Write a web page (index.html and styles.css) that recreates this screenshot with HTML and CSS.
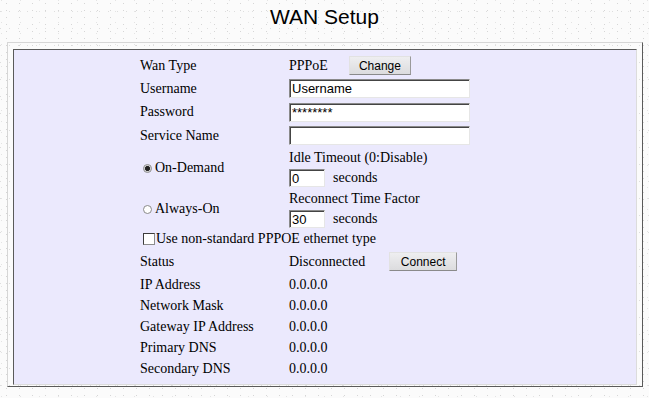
FILE: index.html
```html
<!DOCTYPE html>
<html lang="en">
<head>
  <meta charset="UTF-8" />
  <title>WAN Setup</title>
  <link rel="stylesheet" href="styles.css">
</head>
<body>
  <h1 class="page-title">WAN Setup</h1>

  <div class="frame">
    <div class="panel">
      <form class="wan-form">
        <div class="row">
          <span class="label">Wan Type</span>
          <span class="value">PPPoE <button type="button" class="btn btn-change">Change</button></span>
        </div>
        <div class="row">
          <label class="label" for="username">Username</label>
          <span class="value"><input type="text" id="username" class="field" value="Username" /></span>
        </div>
        <div class="row row-pass">
          <label class="label" for="password">Password</label>
          <span class="value"><input type="text" id="password" class="field" value="********" /></span>
        </div>
        <div class="row">
          <label class="label" for="service">Service Name</label>
          <span class="value"><input type="text" id="service" class="field" /></span>
        </div>

        <!-- connection mode -->
        <div class="row row-tall first-mode">
          <label class="label radio-label"><input type="radio" name="mode" class="radio" checked />On-Demand</label>
          <div class="value stack">
            <span class="sub-title">Idle Timeout (0:Disable)</span>
            <span class="sub-input"><input type="text" class="field small" value="0" /> seconds</span>
          </div>
        </div>
        <div class="row row-tall">
          <label class="label radio-label"><input type="radio" name="mode" class="radio" />Always-On</label>
          <div class="value stack">
            <span class="sub-title">Reconnect Time Factor</span>
            <span class="sub-input"><input type="text" class="field small" value="30" /> seconds</span>
          </div>
        </div>
        <div class="row row-check">
          <label class="check-label"><input type="checkbox" class="check" />Use non-standard PPPOE ethernet type</label>
        </div>

        <!-- status -->
        <div class="row row-status">
          <span class="label">Status</span>
          <span class="value"><span class="status-text">Disconnected</span><button type="button" class="btn btn-connect">Connect</button></span>
        </div>
        <div class="row row-info">
          <span class="label">IP Address</span>
          <span class="value">0.0.0.0</span>
        </div>
        <div class="row row-info">
          <span class="label">Network Mask</span>
          <span class="value">0.0.0.0</span>
        </div>
        <div class="row row-info">
          <span class="label">Gateway IP Address</span>
          <span class="value">0.0.0.0</span>
        </div>
        <div class="row row-info">
          <span class="label">Primary DNS</span>
          <span class="value">0.0.0.0</span>
        </div>
        <div class="row row-info">
          <span class="label">Secondary DNS</span>
          <span class="value">0.0.0.0</span>
        </div>
      </form>
    </div>
  </div>
</body>
</html>
```

FILE: styles.css
```css
* {
  box-sizing: border-box;
  margin: 0;
  padding: 0;
}
body {
  background-color: #fbfbfb;
  background-image:
    radial-gradient(circle, #d6d6d6 0.6px, transparent 0.9px),
    radial-gradient(circle, #dedede 0.6px, transparent 0.9px),
    radial-gradient(circle, #e4e4e4 0.6px, transparent 0.9px);
  background-size: 13px 7px, 9px 17px, 19px 11px;
  background-position: 0 0, 5px 3px, 11px 6px;
  font-family: 'Liberation Serif', 'Times New Roman', serif;
  font-size: 14px;
  color: #000;
  width: 649px;
  height: 398px;
  overflow: hidden;
}
.page-title {
  height: 42px;
  padding-top: 3px;
  font-family: 'Liberation Sans', Arial, sans-serif;
  font-size: 21px;
  font-weight: normal;
  line-height: 28px;
  text-align: center;
}
.frame {
  margin: 0 6px 0 7px;
  padding: 6px 5px 1px 5px;
  border: 1px solid;
  border-color: #d6d6d6 #5a5a5a #5a5a5a #d6d6d6;
}
.panel {
  background: #ebe9fd;
  border: 1px solid;
  border-color: #5a5a5a #dcdcdc #dcdcdc #5a5a5a;
  padding: 4px 0 5px;
}
.wan-form {
  width: 370px;
  margin: 0 auto;
}
.row {
  display: flex;
  align-items: center;
  height: 23px;
}
.row-pass {
  height: 24px;
}
.label {
  width: 149px;
  flex-shrink: 0;
}
.value {
  display: flex;
  align-items: center;
}
.row-tall {
  height: 40px;
}
.first-mode {
  height: 42px;
}
.row-check {
  height: 20px;
}
.row-status {
  height: 25px;
}
.row-info {
  height: 21px;
}
.stack {
  flex-direction: column;
  align-items: flex-start;
}
.sub-title {
  height: 20px;
  line-height: 20px;
}
.sub-input {
  height: 21px;
  display: flex;
  align-items: center;
}
.field {
  width: 181px;
  height: 19px;
  border: 1px solid;
  border-color: #8a8a8a #e6e6e6 #e6e6e6 #8a8a8a;
  box-shadow: inset 1px 1px 0 #444;
  background: #fff;
  font-family: 'Liberation Sans', Arial, sans-serif;
  font-size: 13px;
  padding: 0 2px;
  outline: none;
}
.field.small {
  width: 36px;
  height: 18px;
  margin-right: 8px;
}
.btn {
  height: 19px;
  border: 1px solid;
  border-color: #e2e2e2 #9a9a9a #8a8a8a #e2e2e2;
  background: linear-gradient(#eeeef0, #dcdcde);
  font-family: 'Liberation Sans', Arial, sans-serif;
  font-size: 12px;
  color: #000;
}
.btn-change {
  width: 62px;
  margin-left: 21px;
}
.btn-connect {
  width: 68px;
  margin-left: 24px;
}
.radio-label {
  display: flex;
  align-items: center;
  padding-left: 3px;
}
.radio {
  appearance: none;
  width: 9px;
  height: 9px;
  border: 1px solid #8a8a8a;
  border-radius: 50%;
  background: #fff;
  margin-right: 3px;
}
.radio:checked {
  background: radial-gradient(circle, #222 2.2px, #bdbdbd 2.6px, #fff 4px);
}
.check-label {
  display: flex;
  align-items: center;
  padding-left: 3px;
}
.check {
  appearance: none;
  width: 12px;
  height: 12px;
  border: 1px solid;
  border-color: #3c3c3c #8c8c8c #8c8c8c #3c3c3c;
  background: #fff;
  margin-right: 1px;
}
```
